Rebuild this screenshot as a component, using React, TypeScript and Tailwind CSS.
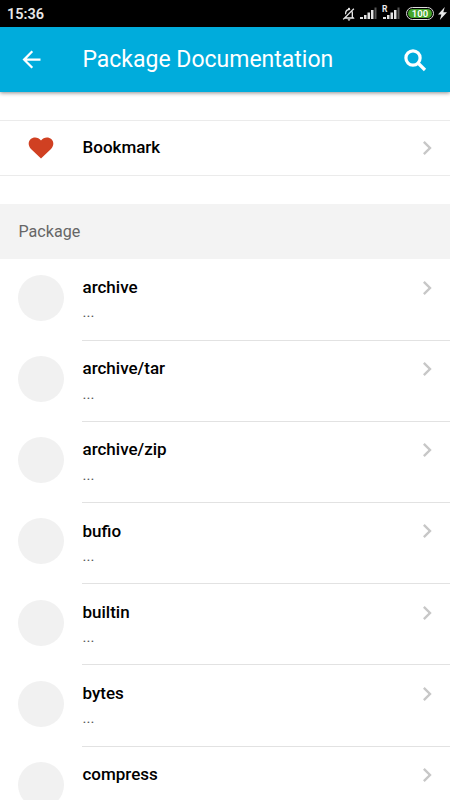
import { MdArrowBack, MdChevronRight, MdOutlineNotificationsOff } from 'react-icons/md';

const packages = ['archive', 'archive/tar', 'archive/zip', 'bufio', 'builtin', 'bytes', 'compress'];

function SignalIcon() {
  return (
    <svg width="18" height="13" viewBox="0 0 18 13" fill="#e2e2e2">
      <rect x="0" y="10" width="3" height="2" />
      <rect x="4" y="8" width="2.5" height="4" />
      <rect x="7.5" y="5.5" width="2.5" height="6.5" />
      <rect x="11" y="3" width="2.5" height="9" />
      <rect x="14.5" y="0.5" width="2" height="11.5" fill="#555555" />
    </svg>
  );
}

function RoamingSignalIcon() {
  return (
    <div className="relative h-[13px] w-[18px]">
      <SignalIcon />
      <span className="absolute -left-px -top-px text-[8.5px] leading-[7px] font-bold">R</span>
    </div>
  );
}

function StatusBar() {
  return (
    <div className="flex h-[27px] items-center bg-black pl-[7px] pr-[3px] text-[#e8e8e8]">
      <span className="flex-1 pt-[2px] text-[14.5px] leading-5 font-semibold">15:36</span>
      <MdOutlineNotificationsOff className="mr-[3px] size-[16px] -scale-x-100" />
      <div className="mr-[5px]">
        <SignalIcon />
      </div>
      <RoamingSignalIcon />
      <div className="ml-[5px] mr-1 flex h-[13px] w-[28px] items-center justify-center rounded-full border border-[#dddddd] p-px">
        <div className="flex h-full w-full items-center justify-center rounded-full bg-[#45a52b] text-[9.5px] leading-none font-semibold text-white">
          100
        </div>
      </div>
      <svg width="9" height="13" viewBox="0 0 9 13" fill="#e8e8e8">
        <path d="M6.8 0L0 7.5h3.4L1.8 13 9 5.2H5.3z" />
      </svg>
    </div>
  );
}

function Header() {
  return (
    <div className="relative flex h-[65px] items-center bg-[#00acdc] pl-[18.4px] pr-[23px] text-white shadow-[0_1px_4px_rgba(0,0,0,0.45)]">
      <MdArrowBack className="size-[27px]" />
      <h1 className="ml-[37px] flex-1 text-[23px] leading-7 font-[450]">Package Documentation</h1>
      <svg width="23" height="23" viewBox="0 0 23 23" fill="none" stroke="white" strokeWidth="3.2" className="mt-[2px]">
        <circle cx="9" cy="9" r="7.1" />
        <path d="M14 14l7 7" />
      </svg>
    </div>
  );
}

function Chevron() {
  return <MdChevronRight className="size-7 shrink-0 text-[#c7c7c7]" />;
}

function PackageRow({ name }: { name: string }) {
  return (
    <li className="flex h-[81.2px] pl-[18.4px]">
      <div className="mt-[15.5px] size-[46px] shrink-0 rounded-full bg-[#f1f1f1]" />
      <div className="ml-[18.1px] flex flex-1 justify-between border-b border-[#e2e2e2] pr-[9px]">
        <div className="pt-[16.7px]">
          <p className="text-[17px] leading-[22px] font-[480] text-black">{name}</p>
          <p className="mt-[4.3px] text-[15px] leading-5 text-[#555555]">...</p>
        </div>
        <div className="pt-[14.5px]">
          <Chevron />
        </div>
      </div>
    </li>
  );
}

export default function App() {
  return (
    <div className="h-[800px] w-[450px] overflow-hidden bg-white font-['Roboto',sans-serif]">
      <StatusBar />
      <Header />
      <div className="mt-7 flex h-14 items-center border-y border-[#ebebeb] pl-[28px] pr-[9px]">
        <svg width="26" height="22" viewBox="0 0 26 22" fill="#d04022">
          <path d="M13 21.5L3 12C0 9 0 4.5 2.5 2.2C5.5 -.5 10.5 0 13 3.5C15.5 0 20.5 -.5 23.5 2.2C26 4.5 26 9 23 12Z" />
        </svg>
        <p className="ml-[28.5px] flex-1 pb-0.5 text-[17px] leading-[22px] font-[480] text-black">Bookmark</p>
        <Chevron />
      </div>
      <h2 className="mt-7 flex h-[55px] items-center bg-[#f3f3f3] pt-px pl-[18.5px] text-[16.1px] text-[#666666]">
        Package
      </h2>
      <ul className="pt-[0.4px]">
        {packages.map((name) => (
          <PackageRow key={name} name={name} />
        ))}
      </ul>
    </div>
  );
}
